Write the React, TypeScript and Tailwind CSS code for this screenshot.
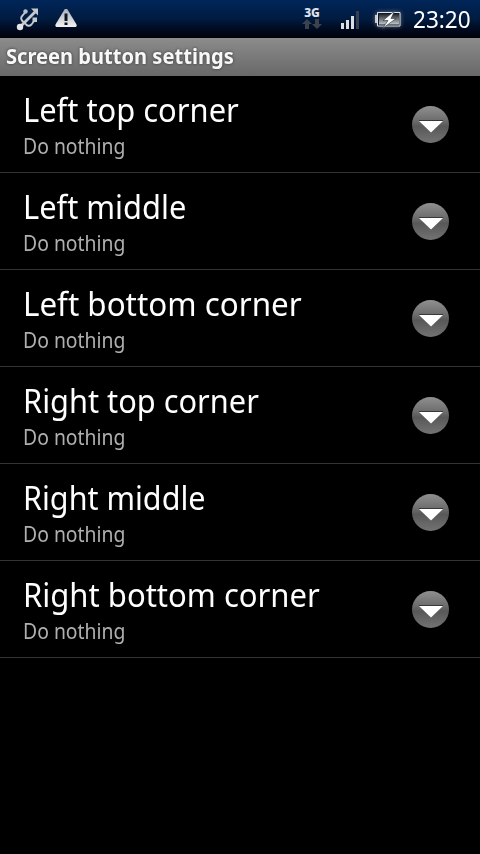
const buttons = [
  { title: 'Left top corner', summary: 'Do nothing', fit: 'scale-x-[.936]' },
  { title: 'Left middle', summary: 'Do nothing', fit: 'scale-x-[.934]' },
  { title: 'Left bottom corner', summary: 'Do nothing', fit: 'scale-x-[.95]' },
  { title: 'Right top corner', summary: 'Do nothing', fit: 'scale-x-[.932]' },
  { title: 'Right middle', summary: 'Do nothing', fit: 'scale-x-[.925]' },
  { title: 'Right bottom corner', summary: 'Do nothing', fit: 'scale-x-[.94]' },
]

function UsbIcon() {
  return (
    <svg width="24" height="24" viewBox="0 0 24 24" fill="none" stroke="#c6c9cf">
      <path d="M4 20L19 5" strokeWidth="2.8" />
      <path d="M15 1.500H22V8.500z" fill="#c6c9cf" stroke="none" />
      <path d="M8.500 15.500C4.500 13.500 4.500 10.500 6.500 8.500L9.500 5" strokeWidth="1.900" />
      <path d="M8.500 15.500C11 19.500 13.500 19.500 15.500 17.500L18.500 13.500" strokeWidth="1.900" />
      <circle cx="4" cy="20" r="3.200" fill="#e4e5e8" stroke="none" />
      <circle cx="9.500" cy="4.500" r="2.200" fill="#b9bec7" stroke="none" />
      <path d="M16.500 10.500h4.500V15h-4.500z" fill="#c3c7ce" stroke="none" />
    </svg>
  )
}

function WarningIcon() {
  return (
    <svg width="22" height="20" viewBox="0 0 22 20">
      <defs>
        <linearGradient id="warn" x1="0" y1="0" x2="0" y2="1">
          <stop offset="0" stopColor="#a9aeb8" />
          <stop offset="1" stopColor="#f2f2f2" />
        </linearGradient>
      </defs>
      <path d="M9.500 .500Q11 -1 12.500 .500L21.500 15.500Q22 18 20.500 18h-19Q0 18 .5 15.500z" fill="url(#warn)" />
      <path d="M9.500 4.500h3v7.500h-3zM9.500 13.500h3v2.500h-3z" fill="#0b1424" />
    </svg>
  )
}

function DataIcon() {
  return (
    <div className="flex w-[20px] flex-col items-center">
      <span className="h-[10px] text-[12px] leading-[8px] font-extrabold text-[#e0e4ea]">3G</span>
      <svg width="20" height="10" viewBox="0 0 20 10" fill="#3c424c">
        <path d="M5 0l5 5H7v5H3V5H0zM15 10l-5-5h3V0h4v5h3z" />
      </svg>
    </div>
  )
}

function SignalIcon() {
  return (
    <svg width="19" height="18" viewBox="0 0 19 18" fill="#dcdedf">
      <path d="M0 12h3v6H0zM5 9h3v9H5zM10 5h3v13h-3z" />
      <path d="M15 0h3v18h-3z" fill="#354052" />
    </svg>
  )
}

function BatteryIcon() {
  return (
    <svg width="28" height="20" viewBox="0 0 28 20" className="drop-shadow-[0_0_2px_#6a727e]">
      <defs>
        <linearGradient id="charge" x1="0" y1="0" x2="0" y2="1">
          <stop offset="0" stopColor="#20262f" />
          <stop offset="1" stopColor="#c4c7c9" />
        </linearGradient>
      </defs>
      <path d="M3.500 3.500h22.500v13.500H3.500z" fill="#0c182b" stroke="#e1e3e5" />
      <path d="M5 5h20v10.500H5z" fill="url(#charge)" />
      <path d="M1 6h2v8H1z" fill="#c9ccd0" />
      <path d="M20.500 2L9 11.500h5L8.500 19.500 22 9.500h-5z" fill="#fff" stroke="#26303c" strokeWidth=".6" />
    </svg>
  )
}

function DropdownIcon() {
  return (
    <svg width="38" height="38" viewBox="0 0 38 38">
      <defs>
        <linearGradient id="knob" x1="0" y1="0" x2="0" y2="1">
          <stop offset="0" stopColor="#909090" />
          <stop offset=".4" stopColor="#6c6c6c" />
          <stop offset=".55" stopColor="#585858" />
          <stop offset="1" stopColor="#737373" />
        </linearGradient>
      </defs>
      <circle cx="19.500" cy="19.500" r="18.500" fill="url(#knob)" />
      <path d="M8 15.500h24" stroke="#383838" />
      <path d="M8 16h24L20 27.500z" fill="#fff" />
    </svg>
  )
}

function StatusBar() {
  return (
    <div className="flex h-[38px] items-center bg-linear-to-b from-[#00265a] via-[#001b40] to-[#000208] text-white">
      <div className="ml-[16px] flex items-center gap-[15px]">
        <UsbIcon />
        <WarningIcon />
      </div>
      <div className="ml-auto flex items-center pr-[10px]">
        <DataIcon />
        <div className="ml-[19px] pt-[2px]">
          <SignalIcon />
        </div>
        <div className="ml-[14px]">
          <BatteryIcon />
        </div>
        <span className="ml-[11px] w-[57px] origin-left scale-x-[.98] text-[23px] leading-[38px] whitespace-nowrap">
          23:20
        </span>
      </div>
    </div>
  )
}

function App() {
  return (
    <div className="h-[854px] w-[480px] overflow-hidden bg-black font-['Noto_Sans',sans-serif]">
      <StatusBar />
      <header className="h-[38px] bg-linear-to-b from-[#8c8c8c] to-[#686868] px-[6px]">
        <h1 className="w-max origin-left scale-x-[.957] text-[21px] leading-[37px] font-bold text-[#f8f8f8] [text-shadow:0_0_3px_#333]">
          Screen button settings
        </h1>
      </header>
      <ul>
        {buttons.map((button) => (
          <li
            key={button.title}
            className="flex h-[97px] items-center justify-between border-b border-[#333] pr-[31px] pl-[23px]"
          >
            <div className="pt-[3px]">
              <div className={`w-max origin-left text-[33px] leading-[40px] text-white ${button.fit}`}>
                {button.title}
              </div>
              <div className="mt-[1px] w-max origin-left scale-x-[.922] text-[21px] leading-[30px] text-[#afafaf]">
                {button.summary}
              </div>
            </div>
            <DropdownIcon />
          </li>
        ))}
      </ul>
    </div>
  )
}

export default App
